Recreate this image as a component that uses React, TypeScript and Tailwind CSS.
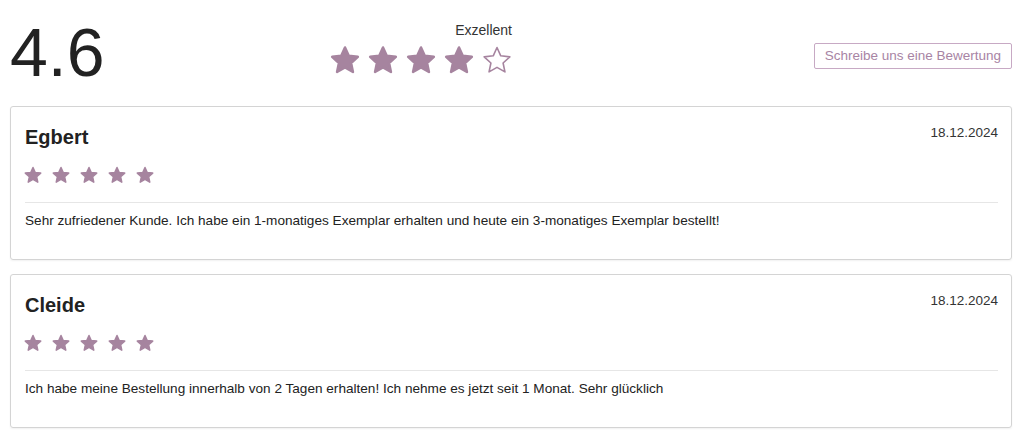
import React from "react";

// rounded five-point star, computed once
const starPoints = (cx: number, cy: number, R: number, r: number) => {
  const pts: string[] = [];
  for (let i = 0; i < 10; i++) {
    const rad = i % 2 === 0 ? R : r;
    const a = (Math.PI / 180) * (-90 + i * 36);
    pts.push(`${(cx + rad * Math.cos(a)).toFixed(2)},${(cy + rad * Math.sin(a)).toFixed(2)}`);
  }
  return pts.join(" ");
};

const STAR = starPoints(15, 16, 13.5, 6.4);

const Star = ({ filled = true, size }: { filled?: boolean; size: number }) => (
  <svg width={size} height={size} viewBox="0 0 30 30" className="shrink-0">
    <polygon
      points={STAR}
      fill={filled ? "#a6849f" : "none"}
      stroke="#a6849f"
      strokeWidth={filled ? 2.5 : 1.6}
      strokeLinejoin="round"
    />
  </svg>
);

type Review = { name: string; date: string; text: string };

const reviews: Review[] = [
  {
    name: "Egbert",
    date: "18.12.2024",
    text: "Sehr zufriedener Kunde. Ich habe ein 1-monatiges Exemplar erhalten und heute ein 3-monatiges Exemplar bestellt!",
  },
  {
    name: "Cleide",
    date: "18.12.2024",
    text: "Ich habe meine Bestellung innerhalb von 2 Tagen erhalten! Ich nehme es jetzt seit 1 Monat. Sehr glücklich",
  },
];

const ReviewCard = ({ review }: { review: Review }) => (
  <div className="border border-[#d4d4d4] rounded-[3px] shadow-[0_1px_2px_rgba(0,0,0,0.06)] pl-[14px] pr-[13px] pt-4 pb-[28px]">
    <div className="flex justify-between items-start">
      <div className="text-[20px] leading-[28px] font-bold text-[#222]">{review.name}</div>
      <div className="text-[13.5px] leading-[20px] text-[#333]">{review.date}</div>
    </div>
    <div className="flex gap-[10px] mt-[15px] h-[18px] items-center -ml-[1px]">
      {[0, 1, 2, 3, 4].map((i) => (
        <Star key={i} size={18} />
      ))}
    </div>
    <div className="h-px bg-[#e6e6e6] mt-[18px]" />
    <p className="text-[13.6px] leading-[20px] text-[#222] pt-[8px]">{review.text}</p>
  </div>
);

export default function App() {
  return (
    <div className="bg-white w-[1024px] h-[432px] overflow-hidden font-['Liberation_Sans',Arial,sans-serif] pl-[10px] pr-[12px]">
      <div className="grid grid-cols-2 h-[106px]">
        <div className="flex justify-between items-start">
          <div className="text-[68px] leading-none text-[#222] mt-[18px]">4.6</div>
          <div className="flex flex-col items-end mt-[22px] -mr-[1px]">
            <div className="text-[14px] leading-[16px] text-[#333]">Exzellent</div>
            <div className="flex gap-[8px] mt-[7px]">
              {[0, 1, 2, 3].map((i) => (
                <Star key={i} size={30} />
              ))}
              <Star filled={false} size={30} />
            </div>
          </div>
        </div>
        <div className="flex justify-end items-start">
          <button className="mt-[43px] h-[26px] px-[10px] border border-[#c7a9c4] rounded-[2px] text-[13.5px] text-[#a884a4] bg-white">
            Schreibe uns eine Bewertung
          </button>
        </div>
      </div>
      <div className="flex flex-col gap-[14px]">
        {reviews.map((r) => (
          <ReviewCard key={r.name} review={r} />
        ))}
      </div>
    </div>
  );
}
